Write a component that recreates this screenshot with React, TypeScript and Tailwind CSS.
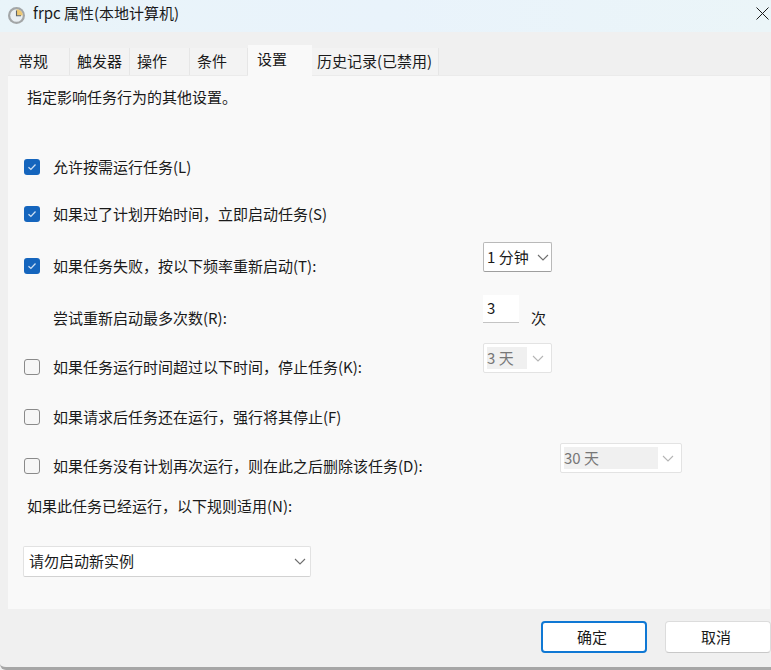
import React from "react";

const font = { fontFamily: '"Noto Sans CJK SC", "Open Sans", sans-serif' };

function Check({ on }: { on: boolean }) {
  return on ? (
    <span className="flex h-4 w-4 shrink-0 items-center justify-center rounded-[3px] bg-[#1565bd]">
      <svg width="10" height="8" viewBox="0 0 10 8" fill="none" stroke="#cfe0f3" strokeWidth="1.3">
        <path d="M1.5 4.2 L3.9 6.4 L8.5 1.5" />
      </svg>
    </span>
  ) : (
    <span className="h-4 w-4 shrink-0 rounded-[3px] border border-[#8a8a8a] bg-[#f6f6f6]" />
  );
}

function Chevron({ color }: { color: string }) {
  return (
    <svg width="12" height="7" viewBox="0 0 12 7" fill="none" stroke={color} strokeWidth="1.1" className="shrink-0">
      <path d="M1 1 L6 6 L11 1" />
    </svg>
  );
}

function Select({ text, width }: { text: string; width: string }) {
  return (
    <div className={`flex h-[30px] shrink-0 items-center rounded-[2px] border border-[#b9b9b9] border-b-[#9e9e9e] bg-white pl-[3px] pr-[2px] text-[15px] text-[#1a1a1a] ${width}`}>
      <span className="flex-1 pb-[2px] leading-none">{text}</span>
      <Chevron color="#6e6e6e" />
    </div>
  );
}

function DisabledSelect({ text, width, fill }: { text: string; width: string; fill: string }) {
  return (
    <div className={`flex h-[30px] shrink-0 items-center rounded-[2px] border border-[#e3e3e3] bg-white pl-[3px] pr-[3px] text-[15px] text-[#777777] ${width}`}>
      <span className={`flex h-[22px] items-center bg-[#f0f0f0] pb-[2px] leading-none ${fill}`}>{text}</span>
      <span className="flex flex-1 justify-center">
        <Chevron color="#b5b5b5" />
      </span>
    </div>
  );
}

function Row({
  top,
  on,
  label,
  labelWidth = "w-[430px]",
  children,
}: {
  top: string;
  on?: boolean;
  label: string;
  labelWidth?: string;
  children?: React.ReactNode;
}) {
  return (
    <div className={`flex h-[24px] items-center pl-4 ${top}`}>
      {on === undefined ? <span className="h-4 w-4 shrink-0" /> : <Check on={on} />}
      <span className={`ml-[13px] shrink-0 whitespace-nowrap pb-[2px] text-[15px] leading-none text-[#1a1a1a] ${labelWidth}`}>{label}</span>
      {children}
    </div>
  );
}

const tabs = [
  { t: "常规", w: "w-[60px] pl-[8px]" },
  { t: "触发器", w: "w-[60px] pl-[7px]" },
  { t: "操作", w: "w-[60px] pl-[7px]" },
  { t: "条件", w: "w-[58px] pl-[7px]" },
];

export default function App() {
  return (
    <div className="flex h-[670px] w-[771px] flex-col overflow-hidden bg-[#f0f0f0]" style={font}>
      <div className="flex h-8 shrink-0 items-center bg-gradient-to-r from-[#e9f4f9] via-[#e9f3fb] to-[#ebf5f8] pb-[5px] pl-2 pr-[2px]">
        <svg width="17" height="17" viewBox="0 0 17 17" className="mt-[3px] shrink-0">
          <circle cx="8.5" cy="8.5" r="8.5" fill="#a3a6a7" />
          <circle cx="8.5" cy="8.5" r="6.3" fill="#e9eff3" />
          <path d="M8.5 8.5 V2.2 A6.3 6.3 0 0 1 14.8 8.5 Z" fill="#edc873" />
          <path d="M8.5 3.5 V8.8 H13" fill="none" stroke="#5f6468" strokeWidth="1.1" />
        </svg>
        <span className="mb-[3px] ml-2 whitespace-nowrap text-[15px] leading-none text-[#1a1a1a]">frpc 属性(本地计算机)</span>
        <svg width="13" height="13" viewBox="0 0 13 13" fill="none" stroke="#1a1a1a" strokeWidth="1" className="ml-auto">
          <path d="M0.5 0.5 L12.5 12.5 M12.5 0.5 L0.5 12.5" />
        </svg>
      </div>

      <div className="flex h-[43px] shrink-0 items-end pl-[10px]">
        {tabs.map((x) => (
          <div key={x.t} className={`flex h-[27px] items-center border-r border-[#e6e6e6] bg-[#f3f3f3] pb-[3px] text-[15px] leading-none text-[#1a1a1a] ${x.w}`}>
            {x.t}
          </div>
        ))}
        <div className="z-10 -mb-px flex h-[31px] w-[64px] items-start bg-[#f9f9f9] pl-[9px] pt-[6px] text-[15px] leading-none text-[#1a1a1a]">
          设置
        </div>
        <div className="flex h-[27px] w-[127px] items-center border-r border-[#e6e6e6] bg-[#f3f3f3] pb-[3px] pl-[5px] text-[15px] leading-none whitespace-nowrap text-[#1a1a1a]">
          历史记录(已禁用)
        </div>
      </div>

      <div className="ml-2 mr-px flex h-[534px] shrink-0 flex-col border-t border-[#ebebeb] bg-[#f9f9f9]">
        <div className="mt-[13px] h-[16px] pl-[19px] text-[15px] leading-4 text-[#1a1a1a]">指定影响任务行为的其他设置。</div>
        <Row top="mt-[50px]" on label="允许按需运行任务(L)" />
        <Row top="mt-[23px]" on label="如果过了计划开始时间，立即启动任务(S)" />
        <Row top="mt-[28px]" on label="如果任务失败，按以下频率重新启动(T):">
          <div className="mb-[18px]">
            <Select text="1 分钟" width="w-[69px]" />
          </div>
        </Row>
        <Row top="mt-[28px]" label="尝试重新启动最多次数(R):">
          <div className="mb-[18px] flex h-[28px] w-[36px] shrink-0 items-center border-b border-[#c4c4c4] bg-white pb-[2px] pl-[4px] text-[15px] leading-none text-[#1a1a1a]">3</div>
          <span className="ml-[12px] pb-[2px] text-[15px] leading-none text-[#1a1a1a]">次</span>
        </Row>
        <Row top="mt-[25px]" on={false} label="如果任务运行时间超过以下时间，停止任务(K):">
          <div className="mb-[18px]">
            <DisabledSelect text="3 天" width="w-[69px]" fill="w-[40px]" />
          </div>
        </Row>
        <Row top="mt-[26px]" on={false} label="如果请求后任务还在运行，强行将其停止(F)" />
        <Row top="mt-[25px]" on={false} label="如果任务没有计划再次运行，则在此之后删除该任务(D):" labelWidth="w-[507px]">
          <div className="mb-4">
            <DisabledSelect text="30 天" width="w-[122px]" fill="w-[94px]" />
          </div>
        </Row>
        <div className="mt-[20px] h-[16px] pl-[19px] text-[15px] leading-4 text-[#1a1a1a]">如果此任务已经运行，以下规则适用(N):</div>
        <div className="ml-[15px] mt-[32px] flex h-[31px] w-[288px] items-center rounded-[2px] border border-[#e2e2e2] border-b-[#d2d2d2] bg-white pl-[5px] pr-[4px] text-[15px] leading-none text-[#1a1a1a]">
          <span className="flex-1 pb-[2px]">请勿启动新实例</span>
          <Chevron color="#6e6e6e" />
        </div>
      </div>

      <div className="flex flex-1 flex-col rounded-bl-[6px] border-b-[3px] border-[#a6a6a6]">
        <div className="flex h-[58px] items-start justify-end gap-[18px] pt-[12px] text-[15px] leading-none text-[#1a1a1a]">
          <div className="flex h-8 w-[106px] items-center justify-center rounded-[4px] border-2 border-[#0f78d4] bg-white pb-[2px] pr-1">确定</div>
          <div className="flex h-8 w-[106px] items-center justify-center rounded-[4px] border border-[#dcdcdc] border-b-[#c8c8c8] bg-white pb-[2px] pr-1">取消</div>
        </div>
      </div>
    </div>
  );
}
